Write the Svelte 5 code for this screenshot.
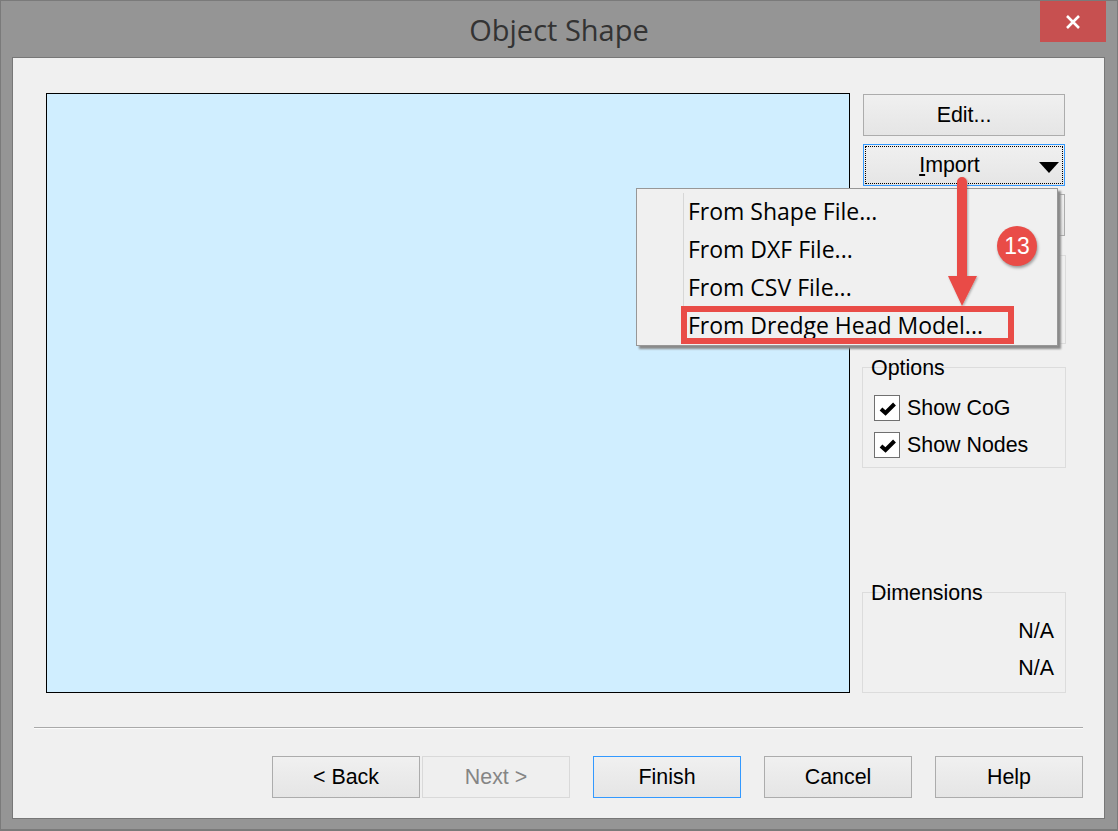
<script>
    const navButtons = [
        { label: "< Back" },
        { label: "Next >", disabled: true },
        { label: "Finish", primary: true },
        { label: "Cancel" },
        { label: "Help" },
    ];
    const menuItems = [
        "From Shape File...",
        "From DXF File...",
        "From CSV File...",
        "From Dredge Head Model...",
    ];
    const options = ["Show CoG", "Show Nodes"];
</script>

<div class="window">
    <header class="titlebar">
        <h1>Object Shape</h1>
        <button class="close" aria-label="Close">
            <svg width="16" height="14" viewBox="0 0 16 14">
                <path d="M2 1 L14 13 M14 1 L2 13" stroke="#fff" stroke-width="2.6" fill="none" />
            </svg>
        </button>
    </header>

    <div class="client">
        <div class="main">
            <div class="canvas"></div>
            <aside class="side">
                <button class="btn">Edit...</button>
                <button class="btn import">
                    <span class="dots">
                        <span><u>I</u>mport</span>
                        <i class="caret"></i>
                    </span>
                </button>
                <button class="btn" aria-label="Covered by the menu"></button>

                <div class="group hidden-group">
                    <i class="peek"></i>
                </div>

                <div class="group options">
                    <span class="legend">Options</span>
                    {#each options as option}
                        <label class="check">
                            <span class="box">
                                <svg width="24" height="24" viewBox="0 0 24 24">
                                    <path d="M6 13 L10.5 17 L19.5 8" stroke="#000" stroke-width="4" fill="none" />
                                </svg>
                            </span>
                            {option}
                        </label>
                    {/each}
                </div>

                <div class="group dims">
                    <span class="legend">Dimensions</span>
                    <div class="na">N/A</div>
                    <div class="na">N/A</div>
                </div>
            </aside>
        </div>

        <div class="sep"></div>

        <div class="nav">
            {#each navButtons as b}
                <button class="btn nav-btn" class:disabled={b.disabled} class:primary={b.primary}>{b.label}</button>
            {/each}
        </div>
    </div>

    <div class="menu">
        {#each menuItems as item}
            <div class="item">{item}</div>
        {/each}
    </div>

    <svg class="marks" width="1118" height="831" viewBox="0 0 1118 831">
        <defs>
            <filter id="soft" x="-30%" y="-10%" width="160%" height="120%">
                <feDropShadow dx="1" dy="1" stdDeviation="1" flood-color="#000" flood-opacity="0.3" />
            </filter>
        </defs>
        <path
            d="M962 177 a5 5 0 0 1 5 5 V276 H977 L962 306 L948 276 H957 V182 a5 5 0 0 1 5 -5 Z"
            fill="#e94c47"
            filter="url(#soft)"
        />
        <rect x="684" y="309" width="327" height="32" fill="none" stroke="#e94c47" stroke-width="6" />
    </svg>
    <div class="badge">13</div>
</div>

<style>
    :global(body) {
        margin: 0;
        background: #959595;
    }

    .window {
        position: relative;
        width: 1118px;
        height: 831px;
        box-sizing: border-box;
        display: flex;
        flex-direction: column;
        background: #959595;
        border: 1px solid #7a7a7a;
        border-bottom-width: 2px;
        font-family: "Liberation Sans", Arial, sans-serif;
        font-size: 21.4px;
        color: #000;
        overflow: hidden;
    }

    .titlebar {
        height: 56px;
        flex: none;
        display: flex;
        justify-content: center;
        position: relative;
    }

    h1 {
        margin: 0;
        padding-top: 10px;
        font-family: "Open Sans", sans-serif;
        font-weight: 400;
        font-size: 29px;
        line-height: 38px;
        color: #333;
    }

    .close {
        position: absolute;
        top: 0;
        right: 11px;
        width: 66px;
        height: 41px;
        padding: 0;
        border: 0;
        background: #c75050;
        display: flex;
        align-items: center;
        justify-content: center;
    }

    .client {
        flex: 1;
        margin: 0 12px 10px 11px;
        background: #f0f0f0;
        border: 1px solid #777;
        display: flex;
        flex-direction: column;
        padding: 35px 0 0 33px;
    }

    .main {
        display: flex;
        gap: 13px;
        height: 600px;
    }

    .canvas {
        box-sizing: border-box;
        width: 804px;
        height: 600px;
        background: #d0eeff;
        border: 1px solid #000;
    }

    .side {
        width: 202px;
        display: flex;
        flex-direction: column;
        padding-top: 1px;
    }

    .btn {
        box-sizing: border-box;
        height: 42px;
        flex: none;
        padding: 0;
        margin-bottom: 8px;
        border: 1px solid #acacac;
        background: linear-gradient(#f0f0f0, #e5e5e5);
        font-family: inherit;
        font-size: inherit;
        color: #000;
    }

    .import {
        border-color: #3399ff;
        padding: 1px;
    }

    .dots {
        position: relative;
        height: 100%;
        box-sizing: border-box;
        display: flex;
        align-items: center;
        justify-content: center;
        border: 1px dotted #000;
        padding-right: 29px;
    }

    .caret {
        position: absolute;
        right: 3px;
        top: 15px;
        border: 10px solid transparent;
        border-top: 11px solid #000;
        border-bottom: 0;
    }

    .group {
        box-sizing: border-box;
        width: 204px;
        margin-left: -1px;
        border: 1px solid #dcdcdc;
    }

    .hidden-group {
        height: 89px;
        margin-top: 11px;
        position: relative;
    }

    .peek {
        display: block;
        width: 13px;
        height: 4px;
        margin: 85px 0 0 16px;
        background: #666;
    }

    .legend {
        display: block;
        width: fit-content;
        margin: -11px 0 0 8px;
        line-height: 23px;
    }

    .options {
        height: 101px;
        margin-top: 23px;
    }

    .check {
        display: flex;
        align-items: center;
        gap: 7px;
        height: 26px;
        margin: 0 0 11px 11px;
    }

    .legend + .check {
        margin-top: 15px;
    }

    .box {
        box-sizing: border-box;
        width: 26px;
        height: 26px;
        background: #fff;
        border: 1px solid #707070;
    }

    .box svg {
        display: block;
    }

    .dims {
        height: 101px;
        margin-top: 124px;
    }

    .na {
        text-align: right;
        padding-right: 11px;
        height: 37px;
        line-height: 37px;
    }

    .legend + .na {
        margin-top: 8px;
    }

    .sep {
        height: 1px;
        margin: 34px 21px 0 -12px;
        background: #a9a9a9;
        border-bottom: 1px solid #fbfbfb;
    }

    .nav {
        display: flex;
        justify-content: flex-end;
        gap: 23px;
        margin: 27px 21px 0 0;
    }

    .nav-btn {
        width: 148px;
        margin: 0;
    }

    .nav-btn:nth-child(2) {
        margin-left: -21px;
    }

    .disabled {
        color: #858585;
        border-color: #d9d9d9;
        background: #efefef;
    }

    .primary {
        border-color: #3399ff;
    }

    .menu {
        position: absolute;
        left: 635px;
        top: 187px;
        box-sizing: border-box;
        width: 422px;
        height: 158px;
        padding: 3px 0 0 51px;
        background: #f0f0f0;
        border: 1px solid #979797;
        box-shadow: 3px 3px 2px #8a8a8a;
        font-family: "Open Sans", sans-serif;
        font-size: 23px;
    }

    .menu::before {
        content: "";
        position: absolute;
        left: 46px;
        top: 4px;
        bottom: 36px;
        width: 1px;
        background: #d7d7d7;
    }

    .item {
        height: 38px;
        line-height: 38px;
        white-space: nowrap;
    }

    .marks {
        position: absolute;
        left: -1px;
        top: -1px;
        pointer-events: none;
    }

    .badge {
        position: absolute;
        left: 996px;
        top: 225px;
        width: 40px;
        height: 40px;
        border-radius: 50%;
        background: #e94c47;
        box-shadow: 1px 2px 3px rgba(0, 0, 0, 0.35);
        color: #fff;
        font-size: 23px;
        line-height: 40px;
        text-align: center;
    }
</style>
